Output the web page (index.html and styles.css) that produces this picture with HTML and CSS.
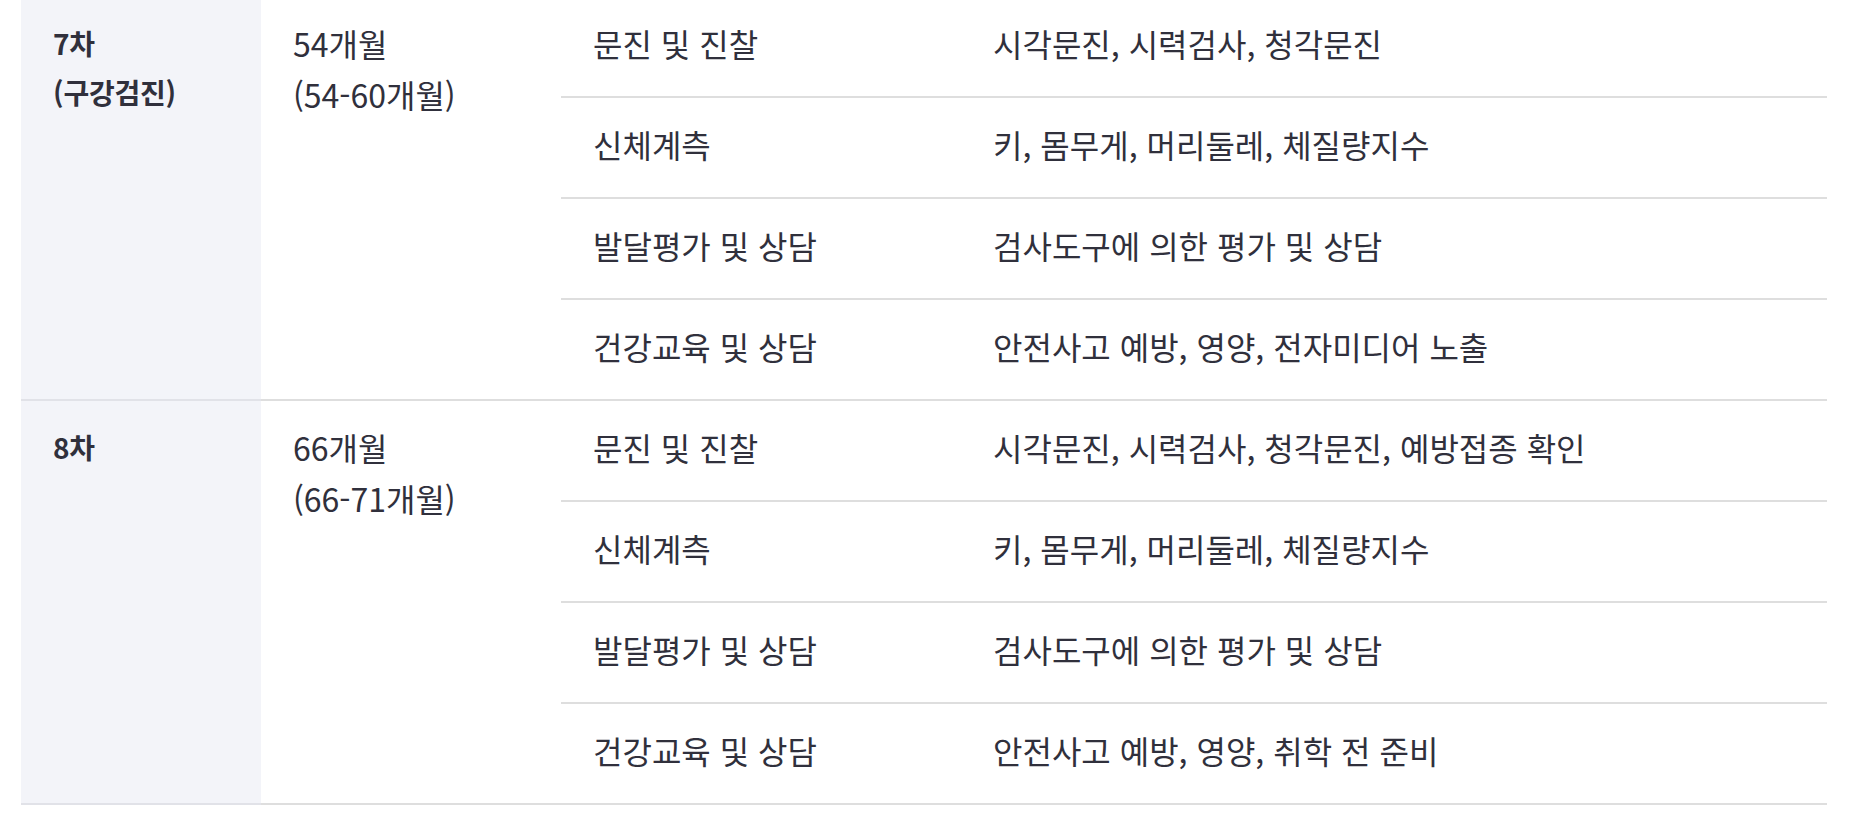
FILE: index.html
```html
<!DOCTYPE html>
<html lang="ko">
<head>
<meta charset="utf-8">
<title>영유아 건강검진</title>
<link rel="stylesheet" href="styles.css">
</head>
<body>
<div class="page">
  <table class="schedule">
    <colgroup>
      <col class="col-round">
      <col class="col-age">
      <col class="col-item">
      <col class="col-detail">
    </colgroup>
    <tbody class="round">
      <tr>
        <th class="label" rowspan="4">7차<br>(구강검진)</th>
        <td class="age" rowspan="4">54개월<br>(54-60개월)</td>
        <td class="item">문진 및 진찰</td>
        <td class="detail">시각문진, 시력검사, 청각문진</td>
      </tr>
      <tr>
        <td class="item">신체계측</td>
        <td class="detail">키, 몸무게, 머리둘레, 체질량지수</td>
      </tr>
      <tr>
        <td class="item">발달평가 및 상담</td>
        <td class="detail">검사도구에 의한 평가 및 상담</td>
      </tr>
      <tr class="last">
        <td class="item">건강교육 및 상담</td>
        <td class="detail">안전사고 예방, 영양, 전자미디어 노출</td>
      </tr>
    </tbody>
    <tbody class="round">
      <tr>
        <th class="label" rowspan="4">8차</th>
        <td class="age" rowspan="4">66개월<br>(66-71개월)</td>
        <td class="item">문진 및 진찰</td>
        <td class="detail">시각문진, 시력검사, 청각문진, 예방접종 확인</td>
      </tr>
      <tr>
        <td class="item">신체계측</td>
        <td class="detail">키, 몸무게, 머리둘레, 체질량지수</td>
      </tr>
      <tr>
        <td class="item">발달평가 및 상담</td>
        <td class="detail">검사도구에 의한 평가 및 상담</td>
      </tr>
      <tr class="last">
        <td class="item">건강교육 및 상담</td>
        <td class="detail">안전사고 예방, 영양, 취학 전 준비</td>
      </tr>
    </tbody>
  </table>
</div>
</body>
</html>
```

FILE: styles.css
```css
html, body {
  margin: 0;
  padding: 0;
  background: #ffffff;
}

body {
  font-family: "Noto Sans CJK KR", "Noto Sans", sans-serif;
  color: #30303c;
}

.page {
  padding: 0 37px 0 21px;
  margin-top: -3px;
}

.schedule {
  width: 100%;
  border-collapse: separate;
  border-spacing: 0;
  table-layout: fixed;
}

.col-round { width: 240px; }
.col-age { width: 300px; }
.col-item { width: 400px; }

.schedule th,
.schedule td {
  padding: 22px 32px 28px 32px;
  text-align: left;
  font-size: 32px;
  line-height: 49px;
  font-weight: 400;
  letter-spacing: 0;
}

.schedule .label {
  background: #f3f4f9;
  vertical-align: top;
  font-size: 28px;
  font-weight: 700;
  letter-spacing: -0.2px;
  line-height: 49px;
  border-bottom: 2px solid #e1e2e8;
}

.schedule .age {
  vertical-align: top;
  line-height: 51px;
  padding-top: 21px;
  border-bottom: 2px solid #dedede;
}

.schedule .item,
.schedule .detail {
  vertical-align: middle;
  border-bottom: 2px solid #dedede;
  white-space: nowrap;
}
```
